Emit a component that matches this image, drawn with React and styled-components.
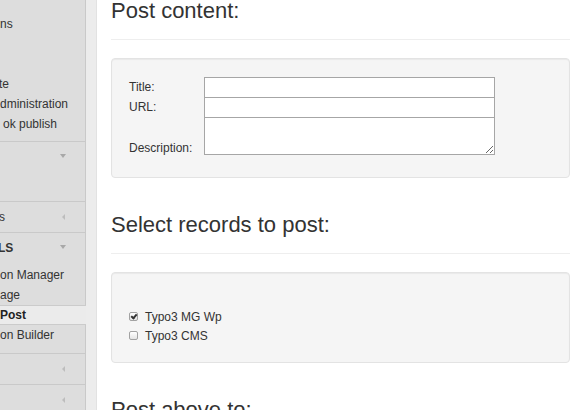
import React from "react";
import styled, { createGlobalStyle } from "styled-components";

const Global = createGlobalStyle`
  html, body { margin: 0; padding: 0; overflow: hidden; background: #fff; }
  body { font-family: "Liberation Sans", Arial, sans-serif; color: #333; }
  * { box-sizing: border-box; }
`;

const Page = styled.div`
  display: flex;
  height: 410px;
  overflow: hidden;
`;

const Sidebar = styled.nav`
  width: 86px;
  flex: none;
  background: #dddddd;
  border-right: 1px solid #c9c9c9;
  font-size: 12px;
  color: #333;
`;

const Gutter = styled.div`
  width: 11px;
  flex: none;
  background: #ececec;
  border-right: 1px solid #e2e2e2;
`;

const Group = styled.ul`
  list-style: none;
  margin: 0;
  padding: ${(p) => p.$top}px 0 ${(p) => p.$bottom}px;
`;

const Item = styled.li`
  height: 20px;
  line-height: 20px;
  white-space: nowrap;
  overflow: hidden;
  text-indent: ${(p) => p.$indent || 0}px;
  ${(p) =>
    p.$active &&
    `
    background: #ebebeb;
    margin-right: -1px;
    border-top: 1px solid #cbcbcb;
    border-bottom: 1px solid #cbcbcb;
    line-height: 18px;
    font-weight: bold;
    color: #222;
  `}
`;

const Header = styled.div`
  height: 31px;
  border-top: 1px solid #c9c9c9;
  display: flex;
  align-items: center;
  padding-right: 19px;
  white-space: nowrap;
  overflow: hidden;
  font-weight: ${(p) => (p.$bold ? "bold" : "normal")};
  text-indent: ${(p) => p.$indent || 0}px;
`;

const HeaderLabel = styled.span`
  flex: 1;
`;

const DownArrow = styled.span`
  width: 0;
  height: 0;
  border-left: 3px solid transparent;
  border-right: 3px solid transparent;
  border-top: 4px solid #a8a8a8;
  margin-top: -2px;
`;

const LeftArrow = styled.span`
  width: 0;
  height: 0;
  border-top: 3px solid transparent;
  border-bottom: 3px solid transparent;
  border-right: 3px solid #bdbdbd;
  margin-right: 1px;
`;

const Content = styled.main`
  flex: 1;
  min-width: 0;
  padding: 0 12px 0 14px;
`;

const Section = styled.section`
  & + & {
    margin-top: 36px;
  }
`;

const Title = styled.h3`
  margin: 0;
  font-size: 22px;
  line-height: 24px;
  font-weight: normal;
  color: #333;
  &:first-child {
    margin-top: -1px;
  }
`;

const Rule = styled.hr`
  border: 0;
  height: 1px;
  background: #eeeeee;
  margin: 16px 0 18px;
`;

const Well = styled.div`
  background: #f5f5f5;
  border: 1px solid #e3e3e3;
  border-radius: 4px;
  box-shadow: inset 0 1px 1px rgba(0, 0, 0, 0.05);
  padding: ${(p) => p.$pad};
`;

const FormGrid = styled.div`
  display: grid;
  grid-template-columns: 75px 291px;
  font-size: 12px;
  color: #333;
`;

const Label = styled.label`
  display: flex;
  align-items: ${(p) => (p.$bottom ? "flex-end" : "center")};
  line-height: 14px;
  padding-bottom: ${(p) => (p.$bottom ? 0 : 2)}px;
  margin-top: ${(p) => (p.$first ? 0 : -1)}px;
`;

const TextInput = styled.input`
  display: block;
  width: 291px;
  height: 21px;
  margin: ${(p) => (p.$first ? 0 : -1)}px 0 0;
  border: 1px solid #a6a6a6;
  background: #fff;
  padding: 1px 3px;
  font: 12px "Liberation Sans", Arial, sans-serif;
  outline: none;
`;

const TextArea = styled.textarea`
  display: block;
  width: 291px;
  height: 38px;
  margin: -1px 0 0;
  border: 1px solid #a6a6a6;
  background: #fff;
  padding: 1px 3px;
  font: 12px "Liberation Sans", Arial, sans-serif;
  resize: both;
  outline: none;
`;

const CheckRow = styled.label`
  display: flex;
  align-items: center;
  height: 19px;
  font-size: 12px;
  color: #333;
`;

const Check = styled.input.attrs({ type: "checkbox" })`
  appearance: none;
  -webkit-appearance: none;
  width: 9px;
  height: 9px;
  margin: 0 7px 0 0;
  border: 1px solid #a2a2a2;
  border-radius: 2px;
  background: linear-gradient(#ffffff, #e4e4e4);
  position: relative;
  flex: none;
  &:checked::after {
    content: "";
    position: absolute;
    left: 2px;
    top: 0px;
    width: 2px;
    height: 4px;
    border-right: 2px solid #333;
    border-bottom: 2px solid #333;
    transform: rotate(40deg);
  }
`;

export default function App() {
  return (
    <>
      <Global />
      <Page>
        <Sidebar>
          <Group $top={14} $bottom={7}>
            <Item>ns</Item>
            <Item />
            <Item />
            <Item $indent={-1}>te</Item>
            <Item>dministration</Item>
            <Item $indent={3}>ok publish</Item>
          </Group>
          <Header>
            <HeaderLabel />
            <DownArrow />
          </Header>
          <Group $top={2} $bottom={7}>
            <Item />
          </Group>
          <Header $indent={-1}>
            <HeaderLabel>s</HeaderLabel>
            <LeftArrow />
          </Header>
          <Header $bold $indent={-2}>
            <HeaderLabel>LS</HeaderLabel>
            <DownArrow />
          </Header>
          <Group $top={2} $bottom={8}>
            <Item>on Manager</Item>
            <Item>age</Item>
            <Item $active>Post</Item>
            <Item>on Builder</Item>
          </Group>
          <Header>
            <HeaderLabel />
            <LeftArrow />
          </Header>
          <Header>
            <HeaderLabel />
            <LeftArrow />
          </Header>
        </Sidebar>
        <Gutter />
        <Content>
          <Section>
            <Title>Post content:</Title>
            <Rule />
            <Well $pad="18px 17px 22px">
              <FormGrid>
                <Label $first htmlFor="title">Title:</Label>
                <TextInput $first id="title" />
                <Label htmlFor="url">URL:</Label>
                <TextInput id="url" />
                <Label $bottom htmlFor="desc">Description:</Label>
                <TextArea id="desc" />
              </FormGrid>
            </Well>
          </Section>
          <Section>
            <Title>Select records to post:</Title>
            <Rule />
            <Well $pad="34px 17px 17px">
              <CheckRow>
                <Check defaultChecked />
                Typo3 MG Wp
              </CheckRow>
              <CheckRow>
                <Check />
                Typo3 CMS
              </CheckRow>
            </Well>
          </Section>
          <Section>
            <Title>Post above to:</Title>
          </Section>
        </Content>
      </Page>
    </>
  );
}
